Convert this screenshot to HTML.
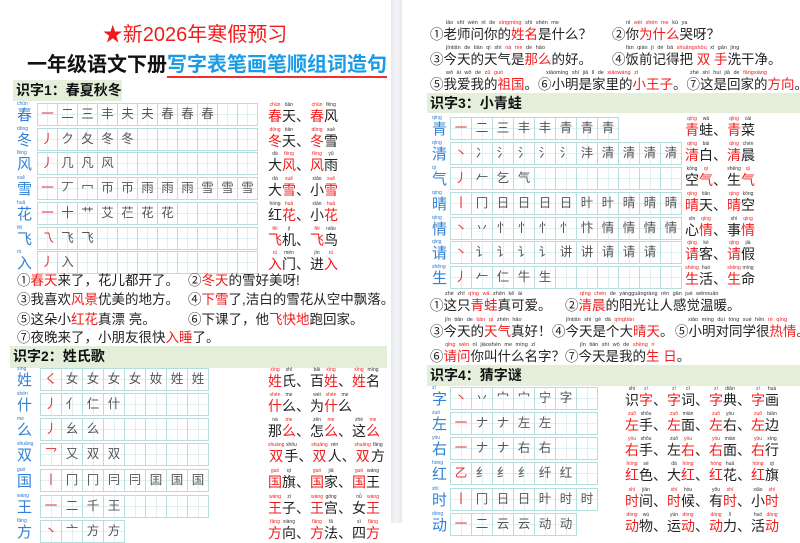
<!DOCTYPE html>
<html><head><meta charset="utf-8"><style>
*{margin:0;padding:0;box-sizing:border-box}
body{width:800px;height:523px;overflow:hidden;background:#fff;position:relative;font-family:"Liberation Sans","Noto Sans CJK SC",sans-serif;color:#222}
.gut{position:absolute;left:391px;top:0;width:11px;height:523px;background:linear-gradient(90deg,#e6e8ee,#f3f4f7,#e6e8ee)}
.a{position:absolute;white-space:nowrap}
.t1{left:0;width:390px;top:22px;text-align:center;font-size:20px;color:#f01c1c;line-height:26px}
.t2{left:27px;top:52px;font-size:20px;font-weight:bold;line-height:26px;color:#111}
.t2 span{color:#1a9be6;border-bottom:2px solid #f03030}
.h{position:absolute;background:#e3efda;font-size:14px;font-weight:bold;line-height:21px;padding-left:3px;color:#111}
.r{position:absolute;height:21px}
.r i{position:absolute;left:0;top:-1px;font-size:5px;color:#2a7bd0;font-style:normal;white-space:nowrap;line-height:5px}
.r b{position:absolute;left:0;top:5px;font-size:15px;color:#2f80d6;font-weight:normal;line-height:16px}
.g{position:absolute;top:0;display:flex;border:1px solid #b6dede;border-right:none}
.g s{display:block;width:21px;height:21px;border-right:1px solid #b6dede;text-decoration:none;font-size:12.5px;line-height:20px;text-align:center;color:#555;background:linear-gradient(#e2efef,#e2efef) center/100% 1px no-repeat,linear-gradient(#e2efef,#e2efef) center/1px 100% no-repeat}
.g.n s{width:20px}
.g s:first-child{color:#e23030}
.w{position:absolute;font-size:14px;white-space:nowrap;line-height:14px;top:-1px}
ruby{ruby-align:center}
rt{font-size:5px;color:#333;line-height:6px}
.red,.red rt{color:#f21c1c}
.s{position:absolute;font-size:13.5px;white-space:nowrap;line-height:15px;color:#222}
.p{position:absolute;font-size:5.5px;white-space:nowrap;color:#333;word-spacing:2px}
</style></head><body>
<div class="gut"></div>
<div class="a t1">★新2026年寒假预习</div>
<div class="a t2">一年级语文下册<span>写字表笔画笔顺组词造句</span></div>

<div class="h" style="left:13px;top:80px;width:109px;height:21px">识字1：春夏秋冬</div>

<div class="r" style="left:17px;top:103px"><i>chūn</i><b>春</b><div class="g n" style="left:20px"><s>一</s><s>二</s><s>三</s><s>丰</s><s>夫</s><s>夫</s><s>春</s><s>春</s><s>春</s><s></s><s></s></div></div>
<div class="r" style="left:17px;top:128px"><i>dōng</i><b>冬</b><div class="g n" style="left:20px"><s>丿</s><s>ク</s><s>夂</s><s>冬</s><s>冬</s><s></s><s></s><s></s><s></s><s></s><s></s></div></div>
<div class="r" style="left:17px;top:152px"><i>fēng</i><b>风</b><div class="g n" style="left:20px"><s>丿</s><s>几</s><s>凡</s><s>风</s><s></s><s></s><s></s><s></s><s></s><s></s><s></s></div></div>
<div class="r" style="left:17px;top:177px"><i>xuě</i><b>雪</b><div class="g n" style="left:20px"><s>一</s><s>丆</s><s>冖</s><s>帀</s><s>帀</s><s>雨</s><s>雨</s><s>雨</s><s>雪</s><s>雪</s><s>雪</s></div></div>
<div class="r" style="left:17px;top:202px"><i>huā</i><b>花</b><div class="g n" style="left:20px"><s>一</s><s>十</s><s>艹</s><s>艾</s><s>芢</s><s>花</s><s>花</s><s></s><s></s><s></s><s></s></div></div>
<div class="r" style="left:17px;top:227px"><i>fēi</i><b>飞</b><div class="g n" style="left:20px"><s>乁</s><s>飞</s><s>飞</s><s></s><s></s><s></s><s></s><s></s><s></s><s></s><s></s></div></div>
<div class="r" style="left:17px;top:251px"><i>rù</i><b>入</b><div class="g n" style="left:20px"><s>丿</s><s>入</s><s></s><s></s><s></s><s></s><s></s><s></s><s></s><s></s><s></s></div></div>

<div class="r" style="left:268px;top:103px"><div class="w"><ruby class="red">春<rt>chūn</rt></ruby><ruby>天<rt>tiān</rt></ruby>、<ruby class="red">春<rt>chūn</rt></ruby><ruby>风<rt>fēng</rt></ruby></div></div>
<div class="r" style="left:268px;top:128px"><div class="w"><ruby class="red">冬<rt>dōng</rt></ruby><ruby>天<rt>tiān</rt></ruby>、<ruby class="red">冬<rt>dōng</rt></ruby><ruby>雪<rt>xuě</rt></ruby></div></div>
<div class="r" style="left:268px;top:152px"><div class="w"><ruby>大<rt>dà</rt></ruby><ruby class="red">风<rt>fēng</rt></ruby>、<ruby class="red">风<rt>fēng</rt></ruby><ruby>雨<rt>yǔ</rt></ruby></div></div>
<div class="r" style="left:268px;top:177px"><div class="w"><ruby>大<rt>dà</rt></ruby><ruby class="red">雪<rt>xuě</rt></ruby>、<ruby>小<rt>xiǎo</rt></ruby><ruby class="red">雪<rt>xuě</rt></ruby></div></div>
<div class="r" style="left:268px;top:202px"><div class="w"><ruby>红<rt>hóng</rt></ruby><ruby class="red">花<rt>huā</rt></ruby>、<ruby>小<rt>xiǎo</rt></ruby><ruby class="red">花<rt>huā</rt></ruby></div></div>
<div class="r" style="left:268px;top:227px"><div class="w"><ruby class="red">飞<rt>fēi</rt></ruby><ruby>机<rt>jī</rt></ruby>、<ruby class="red">飞<rt>fēi</rt></ruby><ruby>鸟<rt>niǎo</rt></ruby></div></div>
<div class="r" style="left:268px;top:251px"><div class="w"><ruby class="red">入<rt>rù</rt></ruby><ruby>门<rt>mén</rt></ruby>、<ruby>进<rt>jìn</rt></ruby><ruby class="red">入<rt>rù</rt></ruby></div></div>

<div class="s" style="left:17px;top:273px">①<span class="red">春天</span>来了，花儿都开了。</div>
<div class="s" style="left:188px;top:273px">②<span class="red">冬天</span>的雪好美呀!</div>
<div class="s" style="left:17px;top:292px">③我喜欢<span class="red">风景</span>优美的地方。</div>
<div class="s" style="left:188px;top:292px">④<span class="red">下雪</span>了,洁白的雪花从空中飘落。</div>
<div class="s" style="left:17px;top:312px">⑤这朵小<span class="red">红花</span>真漂 亮。</div>
<div class="s" style="left:188px;top:312px">⑥下课了，他<span class="red">飞快地</span>跑回家。</div>
<div class="s" style="left:17px;top:330px">⑦夜晚来了，小朋友很快<span class="red">入睡</span>了。</div>

<div class="h" style="left:10px;top:346px;width:377px;height:22px">识字2：姓氏歌</div>

<div class="r" style="left:17px;top:368px"><i>xìng</i><b>姓</b><div class="g" style="left:23px"><s>く</s><s>女</s><s>女</s><s>女</s><s>女</s><s>奻</s><s>姓</s><s>姓</s></div></div>
<div class="r" style="left:17px;top:393px"><i>shén</i><b>什</b><div class="g" style="left:23px"><s>丿</s><s>亻</s><s>仁</s><s>什</s><s></s><s></s><s></s><s></s></div></div>
<div class="r" style="left:17px;top:418px"><i>me</i><b>么</b><div class="g" style="left:23px"><s>丿</s><s>⺓</s><s>么</s><s></s><s></s><s></s><s></s><s></s></div></div>
<div class="r" style="left:17px;top:443px"><i>shuāng</i><b>双</b><div class="g" style="left:23px"><s>乛</s><s>又</s><s>双</s><s>双</s><s></s><s></s><s></s><s></s></div></div>
<div class="r" style="left:17px;top:469px"><i>guó</i><b>国</b><div class="g" style="left:23px"><s>丨</s><s>冂</s><s>冂</s><s>冃</s><s>冃</s><s>囯</s><s>国</s><s>国</s></div></div>
<div class="r" style="left:17px;top:495px"><i>wáng</i><b>王</b><div class="g" style="left:23px"><s>一</s><s>二</s><s>千</s><s>王</s><s></s><s></s><s></s><s></s></div></div>
<div class="r" style="left:17px;top:520px"><i>fāng</i><b>方</b><div class="g" style="left:23px"><s>丶</s><s>亠</s><s>方</s><s>方</s></div></div>

<div class="r" style="left:268px;top:368px"><div class="w"><ruby class="red">姓<rt>xìng</rt></ruby><ruby>氏<rt>shì</rt></ruby>、<ruby>百<rt>bǎi</rt></ruby><ruby class="red">姓<rt>xìng</rt></ruby>、<ruby class="red">姓<rt>xìng</rt></ruby><ruby>名<rt>míng</rt></ruby></div></div>
<div class="r" style="left:268px;top:393px"><div class="w"><ruby class="red">什<rt>shén</rt></ruby><ruby>么<rt>me</rt></ruby>、<ruby>为<rt>wèi</rt></ruby><ruby class="red">什<rt>shén</rt></ruby><ruby>么<rt>me</rt></ruby></div></div>
<div class="r" style="left:268px;top:418px"><div class="w"><ruby>那<rt>nà</rt></ruby><ruby class="red">么<rt>me</rt></ruby>、<ruby>怎<rt>zěn</rt></ruby><ruby class="red">么<rt>me</rt></ruby>、<ruby>这<rt>zhè</rt></ruby><ruby class="red">么<rt>me</rt></ruby></div></div>
<div class="r" style="left:268px;top:443px"><div class="w"><ruby class="red">双<rt>shuāng</rt></ruby><ruby>手<rt>shǒu</rt></ruby>、<ruby class="red">双<rt>shuāng</rt></ruby><ruby>人<rt>rén</rt></ruby>、<ruby class="red">双<rt>shuāng</rt></ruby><ruby>方<rt>fāng</rt></ruby></div></div>
<div class="r" style="left:268px;top:469px"><div class="w"><ruby class="red">国<rt>guó</rt></ruby><ruby>旗<rt>qí</rt></ruby>、<ruby class="red">国<rt>guó</rt></ruby><ruby>家<rt>jiā</rt></ruby>、<ruby class="red">国<rt>guó</rt></ruby><ruby>王<rt>wáng</rt></ruby></div></div>
<div class="r" style="left:268px;top:495px"><div class="w"><ruby class="red">王<rt>wáng</rt></ruby><ruby>子<rt>zǐ</rt></ruby>、<ruby class="red">王<rt>wáng</rt></ruby><ruby>宫<rt>gōng</rt></ruby>、<ruby>女<rt>nǚ</rt></ruby><ruby class="red">王<rt>wáng</rt></ruby></div></div>
<div class="r" style="left:268px;top:520px"><div class="w"><ruby class="red">方<rt>fāng</rt></ruby><ruby>向<rt>xiàng</rt></ruby>、<ruby class="red">方<rt>fāng</rt></ruby><ruby>法<rt>fǎ</rt></ruby>、<ruby>四<rt>sì</rt></ruby><ruby class="red">方<rt>fāng</rt></ruby></div></div>

<div class="p" style="left:446px;top:20px">lǎo shī wèn nǐ de <span class="red">xìngmíng</span> shì shén me</div>
<div class="s" style="left:430px;top:27px">①老师问你的<span class="red">姓名</span>是什么？</div>
<div class="p" style="left:626px;top:20px">nǐ <span class="red">wèi shén me</span> kū ya</div>
<div class="s" style="left:612px;top:27px">②你<span class="red">为什么</span>哭呀？</div>
<div class="p" style="left:446px;top:45px">jīntiān de tiān qì shì <span class="red">nà me</span> de hǎo</div>
<div class="s" style="left:430px;top:52px">③今天的天气是<span class="red">那么</span>的好。</div>
<div class="p" style="left:626px;top:45px">fàn qián jì dé bǎ <span class="red">shuāngshǒu</span> xǐ gān jìng</div>
<div class="s" style="left:612px;top:52px">④饭前记得把 <span class="red">双</span> <span class="red">手</span>洗干净。</div>
<div class="p" style="left:446px;top:70px">wǒ ài wǒ de <span class="red">zǔ guó</span></div>
<div class="s" style="left:430px;top:77px">⑤我爱我的<span class="red">祖国</span>。⑥小明是家里的<span class="red">小王子</span>。⑦这是回家的<span class="red">方向</span>。</div>
<div class="p" style="left:546px;top:70px">xiǎomíng shì jiā lǐ de <span class="red">xiǎowáng zǐ</span></div>
<div class="p" style="left:690px;top:70px">zhè shì huí jiā de <span class="red">fāngxiàng</span></div>

<div class="h" style="left:427px;top:93px;width:373px;height:20px">识字3：小青蛙</div>

<div class="r" style="left:432px;top:117px"><i>qīng</i><b>青</b><div class="g" style="left:18px"><s>一</s><s>二</s><s>三</s><s>丰</s><s>丰</s><s>青</s><s>青</s><s>青</s></div></div>
<div class="r" style="left:432px;top:142px"><i>qīng</i><b>清</b><div class="g" style="left:18px"><s>丶</s><s>冫</s><s>氵</s><s>氵</s><s>氵</s><s>氵</s><s>沣</s><s>清</s><s>清</s><s>清</s><s>清</s></div></div>
<div class="r" style="left:432px;top:167px"><i>qì</i><b>气</b><div class="g" style="left:18px"><s>丿</s><s>𠂉</s><s>乞</s><s>气</s><s></s><s></s><s></s><s></s><s></s><s></s><s></s></div></div>
<div class="r" style="left:432px;top:192px"><i>qíng</i><b>晴</b><div class="g" style="left:18px"><s>丨</s><s>冂</s><s>日</s><s>日</s><s>日</s><s>日</s><s>旪</s><s>旪</s><s>晴</s><s>晴</s><s>晴</s></div></div>
<div class="r" style="left:432px;top:217px"><i>qíng</i><b>情</b><div class="g" style="left:18px"><s>丶</s><s>丷</s><s>忄</s><s>忄</s><s>忄</s><s>忄</s><s>忭</s><s>情</s><s>情</s><s>情</s><s>情</s></div></div>
<div class="r" style="left:432px;top:241px"><i>qǐng</i><b>请</b><div class="g" style="left:18px"><s>丶</s><s>讠</s><s>讠</s><s>讠</s><s>讠</s><s>讲</s><s>讲</s><s>请</s><s>请</s><s>请</s><s></s></div></div>
<div class="r" style="left:432px;top:266px"><i>shēng</i><b>生</b><div class="g" style="left:18px"><s>丿</s><s>𠂉</s><s>仁</s><s>牛</s><s>生</s><s></s><s></s><s></s><s></s><s></s><s></s></div></div>

<div class="r" style="left:685px;top:117px"><div class="w"><ruby class="red">青<rt>qīng</rt></ruby><ruby>蛙<rt>wā</rt></ruby>、<ruby class="red">青<rt>qīng</rt></ruby><ruby>菜<rt>cài</rt></ruby></div></div>
<div class="r" style="left:685px;top:142px"><div class="w"><ruby class="red">清<rt>qīng</rt></ruby><ruby>白<rt>bái</rt></ruby>、<ruby class="red">清<rt>qīng</rt></ruby><ruby>晨<rt>chén</rt></ruby></div></div>
<div class="r" style="left:685px;top:167px"><div class="w"><ruby>空<rt>kōng</rt></ruby><ruby class="red">气<rt>qì</rt></ruby>、<ruby>生<rt>shēng</rt></ruby><ruby class="red">气<rt>qì</rt></ruby></div></div>
<div class="r" style="left:685px;top:192px"><div class="w"><ruby class="red">晴<rt>qíng</rt></ruby><ruby>天<rt>tiān</rt></ruby>、<ruby class="red">晴<rt>qíng</rt></ruby><ruby>空<rt>kōng</rt></ruby></div></div>
<div class="r" style="left:685px;top:217px"><div class="w"><ruby>心<rt>xīn</rt></ruby><ruby class="red">情<rt>qíng</rt></ruby>、<ruby>事<rt>shì</rt></ruby><ruby class="red">情<rt>qing</rt></ruby></div></div>
<div class="r" style="left:685px;top:241px"><div class="w"><ruby class="red">请<rt>qǐng</rt></ruby><ruby>客<rt>kè</rt></ruby>、<ruby class="red">请<rt>qǐng</rt></ruby><ruby>假<rt>jià</rt></ruby></div></div>
<div class="r" style="left:685px;top:266px"><div class="w"><ruby class="red">生<rt>shēng</rt></ruby><ruby>活<rt>huó</rt></ruby>、<ruby class="red">生<rt>shēng</rt></ruby><ruby>命<rt>mìng</rt></ruby></div></div>

<div class="p" style="left:445px;top:291px">zhè zhī <span class="red">qīng wā</span> zhēn kě ài</div>
<div class="s" style="left:430px;top:298px">①这只<span class="red">青蛙</span>真可爱。</div>
<div class="p" style="left:580px;top:291px"><span class="red">qīng chén</span> de yángguāngràng rén gǎn jué wēnnuǎn</div>
<div class="s" style="left:565px;top:298px">②<span class="red">清晨</span>的阳光让人感觉温暖。</div>
<div class="p" style="left:445px;top:317px">jīn tiān de <span class="red">tiān qì</span> zhēn hǎo</div>
<div class="s" style="left:430px;top:324px">③今天的<span class="red">天气</span>真好！</div>
<div class="p" style="left:566px;top:317px">jīntiān shì gè dà <span class="red">qíngtiān</span></div>
<div class="s" style="left:552px;top:324px">④今天是个大<span class="red">晴天</span>。</div>
<div class="p" style="left:688px;top:317px">xiǎo míng duì tóng xué hěn <span class="red">rè qíng</span></div>
<div class="s" style="left:675px;top:324px">⑤小明对同学很<span class="red">热情</span>。</div>
<div class="p" style="left:445px;top:342px"><span class="red">qǐng wèn</span> nǐ jiàoshén me míng zì</div>
<div class="s" style="left:430px;top:349px">⑥<span class="red">请问</span>你叫什么名字？</div>
<div class="p" style="left:580px;top:342px">jīn tiān shì wǒ de <span class="red">shēng rì</span></div>
<div class="s" style="left:565px;top:349px">⑦今天是我的<span class="red">生 日</span>。</div>

<div class="h" style="left:427px;top:365px;width:373px;height:21px">识字4：猜字谜</div>

<div class="r" style="left:432px;top:387px"><i>zì</i><b>字</b><div class="g" style="left:18px"><s>丶</s><s>丷</s><s>宀</s><s>宀</s><s>宁</s><s>字</s><s></s></div></div>
<div class="r" style="left:432px;top:412px"><i>zuǒ</i><b>左</b><div class="g" style="left:18px"><s>一</s><s>ナ</s><s>ナ</s><s>左</s><s>左</s><s></s><s></s></div></div>
<div class="r" style="left:432px;top:437px"><i>yòu</i><b>右</b><div class="g" style="left:18px"><s>一</s><s>ナ</s><s>ナ</s><s>右</s><s>右</s><s></s><s></s></div></div>
<div class="r" style="left:432px;top:462px"><i>hóng</i><b>红</b><div class="g" style="left:18px"><s>乙</s><s>纟</s><s>纟</s><s>纟</s><s>纤</s><s>红</s><s></s></div></div>
<div class="r" style="left:432px;top:488px"><i>shí</i><b>时</b><div class="g" style="left:18px"><s>丨</s><s>冂</s><s>日</s><s>日</s><s>旪</s><s>时</s><s>时</s></div></div>
<div class="r" style="left:432px;top:513px"><i>dòng</i><b>动</b><div class="g" style="left:18px"><s>一</s><s>二</s><s>云</s><s>云</s><s>动</s><s>动</s></div></div>

<div class="r" style="left:625px;top:387px"><div class="w"><ruby>识<rt>shí</rt></ruby><ruby class="red">字<rt>zì</rt></ruby>、<ruby class="red">字<rt>zì</rt></ruby><ruby>词<rt>cí</rt></ruby>、<ruby class="red">字<rt>zì</rt></ruby><ruby>典<rt>diǎn</rt></ruby>、<ruby class="red">字<rt>zì</rt></ruby><ruby>画<rt>huà</rt></ruby></div></div>
<div class="r" style="left:625px;top:412px"><div class="w"><ruby class="red">左<rt>zuǒ</rt></ruby><ruby>手<rt>shǒu</rt></ruby>、<ruby class="red">左<rt>zuǒ</rt></ruby><ruby>面<rt>miàn</rt></ruby>、<ruby class="red">左<rt>zuǒ</rt></ruby><ruby>右<rt>yòu</rt></ruby>、<ruby class="red">左<rt>zuǒ</rt></ruby><ruby>边<rt>biān</rt></ruby></div></div>
<div class="r" style="left:625px;top:437px"><div class="w"><ruby class="red">右<rt>yòu</rt></ruby><ruby>手<rt>shǒu</rt></ruby>、<ruby>左<rt>zuǒ</rt></ruby><ruby class="red">右<rt>yòu</rt></ruby>、<ruby class="red">右<rt>yòu</rt></ruby><ruby>面<rt>miàn</rt></ruby>、<ruby class="red">右<rt>yòu</rt></ruby><ruby>行<rt>xíng</rt></ruby></div></div>
<div class="r" style="left:625px;top:462px"><div class="w"><ruby class="red">红<rt>hóng</rt></ruby><ruby>色<rt>sè</rt></ruby>、<ruby>大<rt>dà</rt></ruby><ruby class="red">红<rt>hóng</rt></ruby>、<ruby class="red">红<rt>hóng</rt></ruby><ruby>花<rt>huā</rt></ruby>、<ruby class="red">红<rt>hóng</rt></ruby><ruby>旗<rt>qí</rt></ruby></div></div>
<div class="r" style="left:625px;top:488px"><div class="w"><ruby class="red">时<rt>shí</rt></ruby><ruby>间<rt>jiān</rt></ruby>、<ruby class="red">时<rt>shí</rt></ruby><ruby>候<rt>hòu</rt></ruby>、<ruby>有<rt>yǒu</rt></ruby><ruby class="red">时<rt>shí</rt></ruby>、<ruby>小<rt>xiǎo</rt></ruby><ruby class="red">时<rt>shí</rt></ruby></div></div>
<div class="r" style="left:625px;top:513px"><div class="w"><ruby class="red">动<rt>dòng</rt></ruby><ruby>物<rt>wù</rt></ruby>、<ruby>运<rt>yùn</rt></ruby><ruby class="red">动<rt>dòng</rt></ruby>、<ruby class="red">动<rt>dòng</rt></ruby><ruby>力<rt>lì</rt></ruby>、<ruby>活<rt>huó</rt></ruby><ruby class="red">动<rt>dòng</rt></ruby></div></div>
</body></html>
